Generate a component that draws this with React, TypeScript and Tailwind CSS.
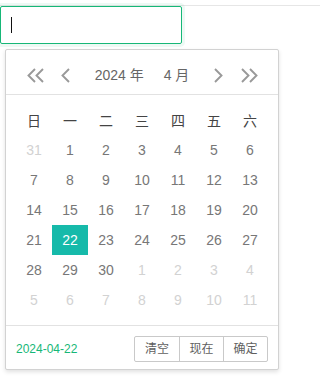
const FONT = "font-['Liberation_Sans','Noto_Sans_CJK_SC',sans-serif]"

const WEEK = ['日', '一', '二', '三', '四', '五', '六']

type Day = { n: number; other?: boolean; active?: boolean }

function buildDays(): Day[] {
  const days: Day[] = [{ n: 31, other: true }]
  for (let i = 1; i <= 30; i++) days.push({ n: i, active: i === 22 })
  for (let i = 1; i <= 11; i++) days.push({ n: i, other: true })
  return days
}

function Chevron({ dir, double }: { dir: 'left' | 'right'; double?: boolean }) {
  const w = double ? 17 : 9
  const flip = dir === 'right' ? `translate(${w} 0) scale(-1 1)` : undefined
  return (
    <svg width={w} height={15} viewBox={`0 0 ${w} 15`} fill="none" stroke="#999" strokeWidth={1.9}>
      <g transform={flip}>
        <polyline points="8,1 1.5,7.5 8,14" />
        {double && <polyline points="16,1 9.5,7.5 16,14" />}
      </g>
    </svg>
  )
}

export default function App() {
  const days = buildDays()

  return (
    <div className={`${FONT} min-h-[384px] bg-white`}>
      <div className="h-[6px] border-b border-[#e6e6e6]" />

      {/* focused input with caret */}
      <div className="flex h-[38px] w-[182px] items-center rounded-[2px] border border-[#16b777] pl-[10px] shadow-[0_0_0_3px_rgba(22,183,119,0.08)]">
        <span className="h-[16px] w-px bg-[#111]" />
      </div>

      {/* laydate panel */}
      <div className="ml-[5px] mt-[5px] w-[274px] rounded-[2px] border border-[#d2d2d2] bg-white shadow-[0_2px_4px_rgba(0,0,0,0.12)]">
        <div className="flex h-[45px] items-start border-b border-[#e2e2e2] pt-[10px]">
          <div className="flex h-[30px] items-center gap-[17px] pl-[21px]">
            <Chevron dir="left" double />
            <Chevron dir="left" />
          </div>
          <div className="flex h-[30px] flex-1 items-center justify-center text-[14px] text-[#666]">
            <span className="px-[10px]">2024 年</span>
            <span className="px-[10px]">4 月</span>
          </div>
          <div className="flex h-[30px] items-center gap-[18px] pr-[20px]">
            <Chevron dir="right" />
            <Chevron dir="right" double />
          </div>
        </div>

        <div className="px-[10px] pb-[10px] pt-[12px]">
          <div className="grid grid-cols-7">
            {WEEK.map((w) => (
              <div key={w} className="flex h-[28px] items-center justify-center text-[14px] text-[#444]">
                {w}
              </div>
            ))}
          </div>
          <div className="grid grid-cols-7">
            {days.map((d, i) => (
              <div
                key={i}
                className={
                  d.active
                    ? 'flex h-[30px] items-center justify-center bg-[#16baaa] text-[14px] text-white'
                    : d.other
                      ? 'flex h-[30px] items-center justify-center text-[14px] text-[#d2d2d2]'
                      : 'flex h-[30px] items-center justify-center text-[14px] text-[#777]'
                }
              >
                {d.n}
              </div>
            ))}
          </div>
        </div>

        <div className="flex h-[44px] items-start justify-between border-t border-[#e2e2e2] px-[10px] pt-[10px]">
          <span className="text-[12px] leading-[26px] text-[#16b777]">2024-04-22</span>
          <div className="flex h-[26px] rounded-[2px] border border-[#c9c9c9] text-[12px] text-[#5f5f5f]">
            <span className="flex w-[44px] items-center justify-center">清空</span>
            <span className="flex w-[44px] items-center justify-center border-l border-[#c9c9c9]">现在</span>
            <span className="flex w-[44px] items-center justify-center border-l border-[#c9c9c9]">确定</span>
          </div>
        </div>
      </div>
    </div>
  )
}
